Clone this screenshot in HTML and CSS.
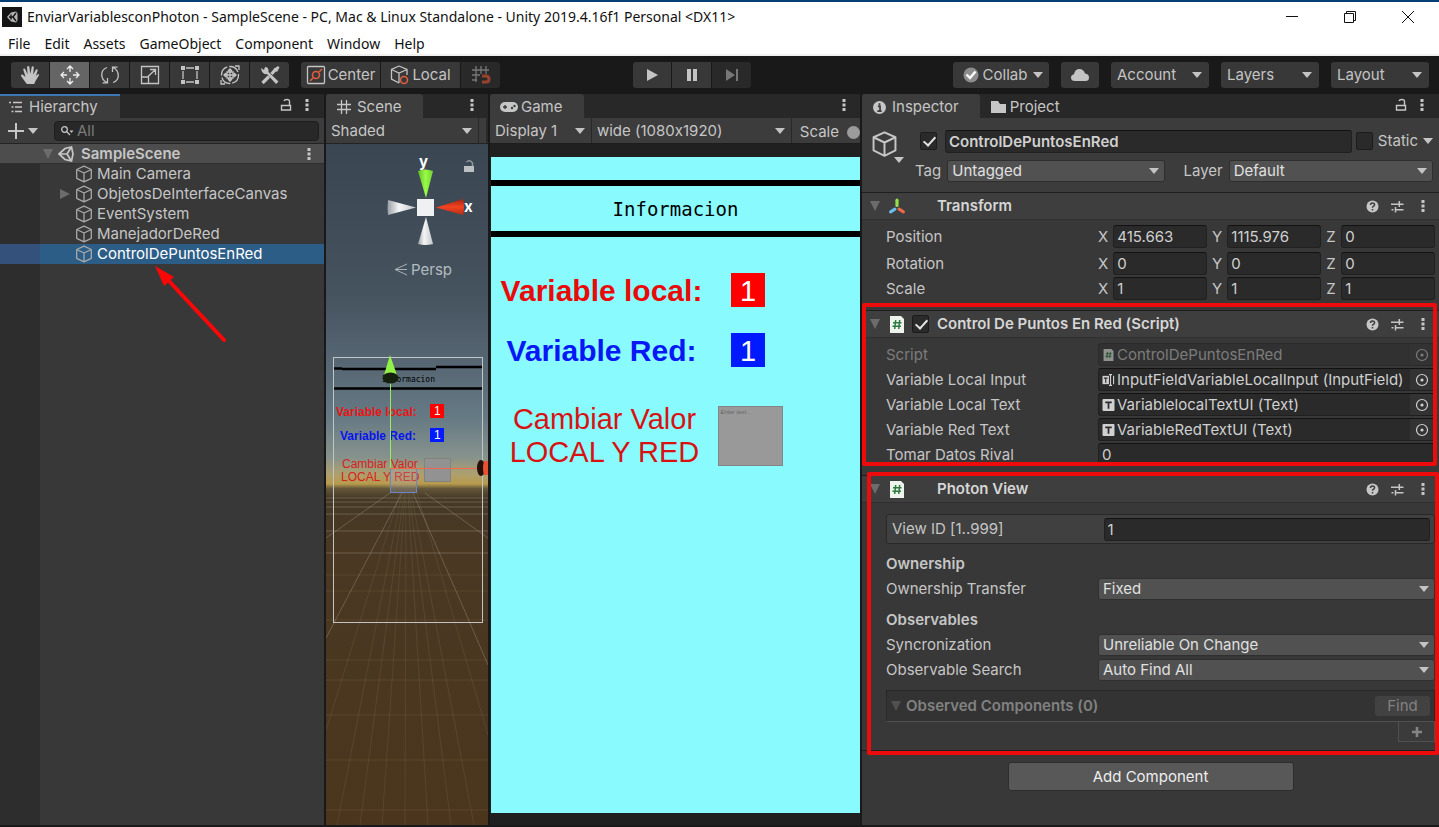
FILE: index.html
```html
<!DOCTYPE html>
<html lang="es">
<head>
<meta charset="utf-8">
<title>EnviarVariablesconPhoton - Unity</title>
<meta name="viewport" content="width=device-width, initial-scale=1">
<link rel="stylesheet" href="styles.css">
</head>
<body>
<svg class="defs" aria-hidden="true">
  <symbol id="kebab" viewBox="0 0 4 14"><path d="M.5 1h3v3h-3zM.5 5.500h3v3h-3zM.5 10h3v3h-3z"/></symbol>
  <symbol id="lock" viewBox="0 0 12 14"><path d="M1.500 7.500h9v4.500h-9zM9.500 7V3.500Q9.500 1.500 7 1.500Q4.500 1.500 4 3" fill="none" stroke="currentColor" stroke-width="1.400"/></symbol>
  <symbol id="caret" viewBox="0 0 10 6"><path d="M0 0h10L5 6z"/></symbol>
  <symbol id="cube" viewBox="0 0 18 18"><path d="M9 1.200L16.300 4.500V13.300L9 16.900L1.700 13.300V4.500zM1.700 4.500L9 8L16.300 4.500M9 8V16.900" fill="none" stroke="currentColor" stroke-width="1.300" stroke-linejoin="round"/></symbol>
  <symbol id="help" viewBox="0 0 13 13"><circle cx="6.500" cy="6.500" r="6"/><path d="M4.500 5Q4.500 3 6.500 3Q8.600 3 8.600 4.800Q8.600 5.800 7.300 6.400Q6.500 6.900 6.500 7.800M6.500 9v1.600" fill="none" stroke="#3c3c3c" stroke-width="1.500"/></symbol>
  <symbol id="presets" viewBox="0 0 13 13"><path d="M0 4.300h8M8.300 1v6M8.300 4.300h4.200M.5 9.800h2M4.500 9.800h8M4.500 7v5.500" fill="none" stroke="currentColor" stroke-width="1.500"/></symbol>
  <symbol id="script" viewBox="0 0 14 17"><path d="M0 0h11l3 3v14H0z" fill="#eef3ee"/><path d="M5.700 4L4.700 13M9.700 4L8.700 13M3 6.700h8.500M2.500 10.300H11" stroke="#2c7a3f" stroke-width="1.500" fill="none"/></symbol>
  <symbol id="textobj" viewBox="0 0 11 11"><rect width="11" height="11" rx="1"/><path d="M2.500 3.200h6M5.500 3v6" stroke="#2b2b2b" stroke-width="1.600" fill="none"/></symbol>
  <symbol id="inputobj" viewBox="0 0 13 13"><path d="M0 2h7v9H0z"/><path d="M1.500 4.500h4M3.500 4.500v5" stroke="#2b2b2b" stroke-width="1.200"/><path d="M7 .7h1.700M10.300.7H8.700v11.600M7 12.300h3.300M12 2v9" fill="none" stroke="currentColor" stroke-width="1.200"/></symbol>
  <symbol id="target" viewBox="0 0 14 14"><circle cx="7" cy="7" r="5.500" fill="none" stroke="currentColor" stroke-width="1.200"/><circle cx="7" cy="7" r="1.600"/></symbol>
</svg>

<header class="window-head">
  <div class="titlebar">
    <svg class="app-icon" viewBox="0 0 20 20"><rect width="20" height="20" fill="#151515"/><path d="M5 10l4-4.500 5-1 1.500 2v7l-1.500 2-5-1z" fill="#b4b4b4"/><path d="M7 10h4l3-4M11 10l3 4M9 7.500v5" stroke="#151515" stroke-width="1.400" fill="none"/></svg>
    <h1>EnviarVariablesconPhoton - SampleScene - PC, Mac &amp; Linux Standalone - Unity 2019.4.16f1 Personal &lt;DX11&gt;</h1>
    <div class="window-buttons">
      <button aria-label="Minimize"><svg viewBox="0 0 12 12"><path d="M0 5.500h12"/></svg></button>
      <button aria-label="Restore"><svg viewBox="0 0 12 12"><path d="M.5 2.500h9v9h-9zM2.500 2.500v-2h9v9h-2"/></svg></button>
      <button aria-label="Close"><svg viewBox="0 0 12 12"><path d="M0 0l12 12M12 0L0 12"/></svg></button>
    </div>
  </div>
  <nav class="menubar">
    <button>File</button><button>Edit</button><button>Assets</button><button>GameObject</button><button>Component</button><button>Window</button><button>Help</button>
  </nav>
</header>

<div class="toolbar">
  <div class="tools">
    <button class="tool" aria-label="Hand"><svg viewBox="0 0 20 20"><path d="M6 18L1 11Q.8 9.300 2.400 9.600L5.600 12L3.200 4.400Q3.600 2.800 5 3.800L7.600 9.500L7 1.800Q8.200.2 9.300 1.600L10.300 9L11.800 1.600Q13 .6 13.800 2L13.300 9.500L16 4.500Q17.600 3.800 17.700 5.400L15.700 11.500Q16.500 9.500 18.500 9Q19.600 9.400 18.900 10.500L15.500 16L14.200 19H7z"/></svg></button>
    <button class="tool active" aria-label="Move"><svg viewBox="0 0 20 20"><path d="M10 7V2M10 13v5M7 10H2M13 10h5M7 4l3-3 3 3M7 16l3 3 3-3M4 7l-3 3 3 3M16 7l3 3-3 3" class="line"/></svg></button>
    <button class="tool" aria-label="Rotate"><svg viewBox="0 0 20 20"><path d="M7 17.500C0 14 0 5 7 2.500M2.500 17.800h5V13M13 2.500C20 6 20 15 13 17.500M17.500 2.200h-5V7" class="line"/></svg></button>
    <button class="tool" aria-label="Scale"><svg viewBox="0 0 20 20"><path d="M1.500 1.500h17v17h-17zM1.500 12h7v6.500M8 11.500L15 5M10 4.500h5.500V10" class="line"/></svg></button>
    <button class="tool" aria-label="Rect"><svg viewBox="0 0 20 20"><path d="M3 6v8M17 6v8M6 3h8M6 17h8" class="line"/><path d="M1 1h4v4H1zM15 1h4v4h-4zM1 15h4v4H1zM15 15h4v4h-4z"/></svg></button>
    <button class="tool" aria-label="Transform"><svg viewBox="0 0 20 20"><circle cx="10" cy="10" r="8.500" class="line" stroke-dasharray="11 2"/><path d="M10 4v12M4 10h12M8 6l2-2 2 2M8 14l2 2 2-2M6 8l-2 2 2 2M14 8l2 2-2 2M7 7h6v6H7zM15 1h4v4M1 15v4h4" class="line"/></svg></button>
    <button class="tool" aria-label="Custom tools"><svg viewBox="0 0 20 20"><path d="M2.500 18L9 11.500M11.500 9L16 4" stroke="currentColor" stroke-width="3.200"/><path d="M1 3l3 2 1-3Q9 2 8.500 7L18.500 16.500l-2.500 2.500L7 9Q2 10 1 3zM13.500 4l4.500-3 1.500 1.500L17 7z"/></svg></button>
  </div>
  <div class="tools pivot">
    <button class="tool wide"><svg viewBox="0 0 20 20"><rect x="1.500" y="1.500" width="17" height="17" rx="1" class="line"/><path d="M4 16l3-3M13 7l3-3" class="line red"/><circle cx="10" cy="10" r="3.500" class="line red"/></svg>Center</button>
    <button class="tool wide"><svg viewBox="0 0 20 20"><path d="M9 1L17 4.500V10M9 1L1.500 4.500V14L9 18M1.500 4.500L9 8L17 4.500M9 8v10" class="line"/><circle cx="14" cy="15" r="3.500" class="line red"/></svg>Local</button>
    <button class="tool disabled" aria-label="Grid snapping" disabled><svg viewBox="0 0 20 20"><path d="M5 1v16M10 1v8M15 1v8M1 5h17M1 10h8M1 15h5" class="line"/><path d="M11 11h4q3 0 3 3t-3 3h-4" class="line snap"/></svg></button>
  </div>
  <div class="tools play">
    <button class="tool" aria-label="Play"><svg viewBox="0 0 20 20"><path d="M5 4l11 6-11 6z"/></svg></button>
    <button class="tool" aria-label="Pause"><svg viewBox="0 0 20 20"><path d="M5 4h4v12H5zM11 4h4v12h-4z"/></svg></button>
    <button class="tool disabled" aria-label="Step" disabled><svg viewBox="0 0 20 20"><path d="M4 4l9 6-9 6zM14 4h2v12h-2z"/></svg></button>
  </div>
  <div class="menus">
    <button class="menu collab"><svg class="ic16" viewBox="0 0 16 16"><circle cx="8" cy="8" r="7.500" fill="#8c8c8c"/><path d="M3.500 7.500L7 11L12.500 4.500" stroke="#fff" stroke-width="2.400" fill="none"/></svg><span>Collab</span><svg class="caret"><use href="#caret"/></svg></button>
    <button class="menu cloud" aria-label="Services"><svg viewBox="0 0 18 14"><path d="M4 13Q0 13 0 9.500Q0 7 3 6.300Q4 1 8.500 1Q12.500 1 14 5.500Q18 6 18 9.500Q18 13 14.500 13z"/></svg></button>
    <button class="menu">Account<svg class="caret"><use href="#caret"/></svg></button>
    <button class="menu">Layers<svg class="caret"><use href="#caret"/></svg></button>
    <button class="menu">Layout<svg class="caret"><use href="#caret"/></svg></button>
  </div>
</div>

<main class="panels">
  <section class="panel hierarchy">
    <div class="tabs">
      <button class="tab current focused"><svg class="ic14" viewBox="0 0 14 14"><path d="M0 2.500h2M4 2.500h9M2.500 7h2M6 7h7M2.500 11.500h2M6 11.500h7" class="line"/></svg>Hierarchy</button>
      <div class="tab-actions"><button aria-label="Lock"><svg class="lock"><use href="#lock"/></svg></button><button aria-label="Options"><svg class="kebab"><use href="#kebab"/></svg></button></div>
    </div>
    <div class="strip search-strip">
      <button class="add" aria-label="Create"><svg class="ic16" viewBox="0 0 16 16"><path d="M8 0v16M0 8h16" stroke="currentColor" stroke-width="2"/></svg><svg class="caret"><use href="#caret"/></svg></button>
      <label class="search"><svg viewBox="0 0 14 12"><circle cx="3.500" cy="4.500" r="2.800" class="line"/><path d="M5.500 6.500L9 10" class="line"/><path d="M8.500 5.500h4L10.500 8z"/></svg><input type="text" placeholder="All" aria-label="Search hierarchy"></label>
    </div>
    <div class="tree">
      <div class="row scene-row"><svg class="fold" viewBox="0 0 10 10"><path d="M0 0h10L5 10z"/></svg><svg class="ic16" viewBox="0 0 16 16"><path d="M1 8L7 2.500l6.500-1.500L15 8L13.500 15L7 13.500zM1 8h8M9 8L13 1.500M9 8l4 6.500" fill="none" stroke="currentColor" stroke-width="1.700"/></svg><strong>SampleScene</strong><button aria-label="Scene options"><svg class="kebab"><use href="#kebab"/></svg></button></div>
      <div class="row"><span class="foldspace"></span><svg class="cube"><use href="#cube"/></svg>Main Camera</div>
      <div class="row"><svg class="fold right" viewBox="0 0 10 10"><path d="M0 0v10l10-5z"/></svg><svg class="cube"><use href="#cube"/></svg>ObjetosDeInterfaceCanvas</div>
      <div class="row"><span class="foldspace"></span><svg class="cube"><use href="#cube"/></svg>EventSystem</div>
      <div class="row"><span class="foldspace"></span><svg class="cube"><use href="#cube"/></svg>ManejadorDeRed</div>
      <div class="row selected"><span class="foldspace"></span><svg class="cube"><use href="#cube"/></svg>ControlDePuntosEnRed</div>
      <svg class="pointer" viewBox="0 0 74 78"><path d="M72 75L16 15" stroke="#fb0707" stroke-width="4" stroke-linecap="round"/><path d="M3 1L22 12L12 21z" fill="#fb0707"/></svg>
    </div>
  </section>

  <section class="panel scene">
    <div class="tabs">
      <button class="tab current"><svg class="ic14" viewBox="0 0 14 14"><path d="M4.500 0v14M9.500 0v14M0 4.500h14M0 9.500h14" class="line"/></svg>Scene</button>
      <div class="tab-actions"><button aria-label="Options"><svg class="kebab"><use href="#kebab"/></svg></button></div>
    </div>
    <div class="strip"><label class="flat shade"><select aria-label="Draw mode"><option>Shaded</option></select></label><span class="rule"></span></div>
    <svg class="scene-view" viewBox="326 144 162 681" preserveAspectRatio="xMidYMin slice">
      <defs>
        <linearGradient id="sky" gradientUnits="userSpaceOnUse" x1="0" y1="144" x2="0" y2="825"><stop offset="0" stop-color="#3a4652"/><stop offset=".22" stop-color="#45535f"/><stop offset=".32" stop-color="#566672"/><stop offset=".4" stop-color="#657984"/><stop offset=".46" stop-color="#86928c"/><stop offset=".485" stop-color="#aea06e"/><stop offset=".499" stop-color="#b89b4c"/><stop offset=".506" stop-color="#63563a"/><stop offset=".52" stop-color="#453926"/><stop offset=".6" stop-color="#4a3823"/><stop offset="1" stop-color="#4b361d"/></linearGradient>
        <linearGradient id="white-cone"><stop offset="0" stop-color="#999ea3"/><stop offset=".4" stop-color="#f5f5f5"/><stop offset="1" stop-color="#c4c7ca"/></linearGradient>
        <linearGradient id="green-cone"><stop offset="0" stop-color="#65bd25"/><stop offset=".5" stop-color="#98fb47"/><stop offset="1" stop-color="#75d22e"/></linearGradient>
        <linearGradient id="red-cone" x1="0" y1="0" x2="0" y2="1"><stop offset="0" stop-color="#a52411"/><stop offset=".5" stop-color="#f34421"/><stop offset="1" stop-color="#b82a12"/></linearGradient>
      </defs>
      <rect x="-1000" y="144" width="3000" height="900" fill="url(#sky)"/>
      <path d="M326 498h162M326 502h162M326 507h162M326 514h162M326 531h162M326 553h162M402 493L346 600L326 638M413 493L460 600L488 665M425 493L488 538M390 493L326 538" stroke="#a39b88" stroke-opacity=".4" fill="none"/>
      <path d="M404 493L360 825M405 493L382 825M406 493L405 825M408 493L428 825M409 493L451 825M411 493L474 825M402 493L337 825M400 493L326 730M417 493L488 735M326 591h162M326 620h162M326 660h162M326 680h162M326 715h162M326 760h162M326 810h162M326 575h162" stroke="#9d8a62" stroke-opacity=".18" fill="none"/>
      <rect x="333.500" y="357.500" width="149" height="265" fill="none" stroke="#c1c5c6"/>
      <path d="M334 368.500h8M342 369h94M436 367h46M334 388.500h148" stroke="#000" stroke-width="2.400"/>
      <text x="382" y="382" class="mini-mono">Informacion</text>
      <g class="mini"><text x="336" y="416" fill="#e91515" font-weight="700">Variable local:</text><text x="340" y="440" fill="#0714ee" font-weight="700">Variable Red:</text><text x="342" y="468" fill="#d42222">Cambiar Valor</text><text x="341" y="481" fill="#d42222">LOCAL Y RED</text></g>
      <path d="M430 404h14v14h-14z" fill="#f00"/><path d="M430 428h14v14h-14z" fill="#001aff"/>
      <g class="mini" fill="#fff"><text x="434" y="415">1</text><text x="434" y="439">1</text></g>
      <rect x="424.500" y="458.500" width="26" height="23" fill="#929292" stroke="#7f8381"/>
      <rect x="390.500" y="468.500" width="26" height="24" fill="#a6a4bb" fill-opacity=".25" stroke="#6a86c8"/>
      <path d="M390.500 377v91" stroke="#95ee56"/><path d="M390 468.500h91" stroke="#ef684c"/>
      <path d="M390 355L384 375h13z" fill="#92f247"/><ellipse cx="390.500" cy="378" rx="8" ry="5.500" fill="#16210f"/>
      <ellipse cx="481" cy="468" rx="4" ry="8" fill="#25100c"/><path d="M484 461h4v14h-4q-2-7 0-14" fill="#e85132"/>
      <path d="M418 171q7-3 15 0l-7 27z" fill="url(#green-cone)"/>
      <path d="M388 200q-1 8 0 15l28-7.500z" fill="url(#white-cone)"/>
      <path d="M463 199q2 8 0 16l-27-7.500z" fill="url(#red-cone)"/>
      <path d="M418 244q7 2 15 0l-7-27z" fill="url(#white-cone)"/>
      <path d="M417 199h17v17h-17z" fill="#eef0f2"/>
      <g class="axis"><text x="419" y="167">y</text><text x="464" y="212">x</text></g>
      <path d="M407 264l-12 5.500L407 275M395 269.500h12" fill="none" stroke="#a8b0b5"/>
      <text x="411" y="275" class="persp">Persp</text>
      <path d="M464 166h10v6h-10z" fill="#bcc0c3"/><path d="M472.500 166v-3q-3-4-6-1" fill="none" stroke="#8e979d" stroke-width="1.500"/>
    </svg>
  </section>

  <section class="panel game">
    <div class="tabs">
      <button class="tab current"><svg class="pad" viewBox="0 0 18 11"><rect width="18" height="10" rx="5"/><path d="M3 5h4M5 3v4" stroke="#3c3c3c" stroke-width="1.400"/><circle cx="12" cy="6" r="1.200" fill="#3c3c3c"/><circle cx="14.500" cy="4" r="1.200" fill="#3c3c3c"/></svg>Game</button>
      <div class="tab-actions"><button aria-label="Options"><svg class="kebab"><use href="#kebab"/></svg></button></div>
    </div>
    <div class="strip"><label class="flat display"><select aria-label="Display"><option>Display 1</option></select></label><label class="flat aspect"><select aria-label="Aspect ratio"><option>wide (1080x1920)</option></select></label><span class="scale">Scale<i></i></span></div>
    <div class="stage">
      <div class="screen">
        <h2>Informacion</h2>
        <div class="values">
          <strong class="local">Variable local:</strong><span class="num red-num">1</span>
          <strong class="net">Variable Red:</strong><span class="num blue-num">1</span>
          <label for="value" class="change">Cambiar Valor<br>LOCAL Y RED</label><textarea id="value" placeholder="Enter text..."></textarea>
        </div>
      </div>
    </div>
  </section>

  <section class="panel inspector">
    <div class="tabs">
      <button class="tab current"><svg class="ic12" viewBox="0 0 12 12"><circle cx="6" cy="6" r="6"/><path d="M6 2v2M4.500 5h2v4M4 9.300h4" stroke="#3c3c3c" stroke-width="1.600" fill="none"/></svg>Inspector</button>
      <button class="tab"><svg class="folder" viewBox="0 0 15 12"><path d="M0 0h7l2 3h6v9H0z"/></svg>Project</button>
      <div class="tab-actions"><button aria-label="Lock"><svg class="lock"><use href="#lock"/></svg></button><button aria-label="Options"><svg class="kebab"><use href="#kebab"/></svg></button></div>
    </div>
    <div class="object-head">
      <button class="object-icon" aria-label="Object icon"><svg class="bigcube"><use href="#cube"/></svg><svg class="caret"><use href="#caret"/></svg></button>
      <div class="object-fields">
        <div class="object-line"><input type="checkbox" checked aria-label="Active"><input class="field name" type="text" value="ControlDePuntosEnRed" aria-label="Name"><input type="checkbox" id="static"><label for="static">Static</label><svg class="caret"><use href="#caret"/></svg></div>
        <div class="object-line second"><label for="tag" class="tag">Tag</label><span class="drop tag-drop"><select id="tag"><option>Untagged</option></select></span><label for="layer" class="layer">Layer</label><span class="drop layer-drop"><select id="layer"><option>Default</option></select></span></div>
      </div>
    </div>

    <section class="component">
      <div class="comp-head"><svg class="fold" viewBox="0 0 10 10"><path d="M0 0h10L5 10z"/></svg><svg class="comp-icon" viewBox="0 0 16 16"><path d="M8 2v5" stroke="#95df4a" stroke-width="3" stroke-linecap="round"/><path d="M6 10.500l-4 2.500" stroke="#69bbec" stroke-width="3" stroke-linecap="round"/><path d="M10 10.500l4 2.500" stroke="#e9694b" stroke-width="3" stroke-linecap="round"/></svg><span class="toggle"></span><h3>Transform</h3><div class="head-actions"><button aria-label="Help"><svg><use href="#help"/></svg></button><button aria-label="Presets"><svg><use href="#presets"/></svg></button><button aria-label="Options"><svg class="kebab"><use href="#kebab"/></svg></button></div></div>
      <div class="comp-body transform">
        <div class="prop first"><span>Position</span><div class="vec"><label for="px">X</label><input id="px" class="field" value="415.663"><label for="py">Y</label><input id="py" class="field" value="1115.976"><label for="pz">Z</label><input id="pz" class="field" value="0"></div></div>
        <div class="prop"><span>Rotation</span><div class="vec"><label for="rx">X</label><input id="rx" class="field" value="0"><label for="ry">Y</label><input id="ry" class="field" value="0"><label for="rz">Z</label><input id="rz" class="field" value="0"></div></div>
        <div class="prop"><span>Scale</span><div class="vec"><label for="sx">X</label><input id="sx" class="field" value="1"><label for="sy">Y</label><input id="sy" class="field" value="1"><label for="sz">Z</label><input id="sz" class="field" value="1"></div></div>
      </div>
    </section>

    <section class="component marked marked-script">
      <div class="comp-head"><svg class="fold" viewBox="0 0 10 10"><path d="M0 0h10L5 10z"/></svg><svg class="comp-icon"><use href="#script"/></svg><span class="toggle"><input type="checkbox" checked aria-label="Enabled"></span><h3>Control De Puntos En Red (Script)</h3><div class="head-actions"><button aria-label="Help"><svg><use href="#help"/></svg></button><button aria-label="Presets"><svg><use href="#presets"/></svg></button><button aria-label="Options"><svg class="kebab"><use href="#kebab"/></svg></button></div></div>
      <div class="comp-body script-body">
        <div class="prop dim"><span>Script</span><div class="field object"><svg><use href="#script"/></svg><span>ControlDePuntosEnRed</span><button aria-label="Pick script" disabled><svg><use href="#target"/></svg></button></div></div>
        <div class="prop"><span>Variable Local Input</span><div class="field object"><svg><use href="#inputobj"/></svg><span>InputFieldVariableLocalInput (InputField)</span><button aria-label="Pick input"><svg><use href="#target"/></svg></button></div></div>
        <div class="prop"><span>Variable Local Text</span><div class="field object"><svg><use href="#textobj"/></svg><span>VariablelocalTextUI (Text)</span><button aria-label="Pick local text"><svg><use href="#target"/></svg></button></div></div>
        <div class="prop"><span>Variable Red Text</span><div class="field object"><svg><use href="#textobj"/></svg><span>VariableRedTextUI (Text)</span><button aria-label="Pick network text"><svg><use href="#target"/></svg></button></div></div>
        <div class="prop"><label for="rival">Tomar Datos Rival</label><input id="rival" class="field" value="0"></div>
      </div>
    </section>

    <section class="component marked marked-photon">
      <div class="comp-head"><svg class="fold" viewBox="0 0 10 10"><path d="M0 0h10L5 10z"/></svg><svg class="comp-icon"><use href="#script"/></svg><span class="toggle"></span><h3>Photon View</h3><div class="head-actions"><button aria-label="Help"><svg><use href="#help"/></svg></button><button aria-label="Presets"><svg><use href="#presets"/></svg></button><button aria-label="Options"><svg class="kebab"><use href="#kebab"/></svg></button></div></div>
      <div class="comp-body photon-body">
        <div class="view-id"><label for="viewid">View ID [1..999]</label><input id="viewid" class="field" value="1"></div>
        <h4>Ownership</h4>
        <div class="prop"><label for="transfer">Ownership Transfer</label><span class="drop"><select id="transfer"><option>Fixed</option></select></span></div>
        <h4>Observables</h4>
        <div class="prop"><label for="sync">Syncronization</label><span class="drop"><select id="sync"><option>Unreliable On Change</option></select></span></div>
        <div class="prop"><label for="searchmode">Observable Search</label><span class="drop"><select id="searchmode"><option>Auto Find All</option></select></span></div>
        <div class="observed"><svg class="fold" viewBox="0 0 10 10"><path d="M0 0h10L5 10z"/></svg><strong>Observed Components (0)</strong><button disabled>Find</button></div>
        <button class="plus" aria-label="Add observed" disabled><svg viewBox="0 0 10 10"><path d="M5 0v10M0 5h10" stroke="currentColor" stroke-width="2.600"/></svg></button>
      </div>
    </section>
    <div class="add-wrap"><button class="add-component">Add Component</button></div>
  </section>
</main>
</body>
</html>
```
FILE: styles.css
```css
* { box-sizing: border-box; }

body {
  margin: 0;
  min-height: 100vh;
  display: flex;
  flex-direction: column;
  background: #191919;
  color: #c6c6c6;
  font: 15px/20px Inter, "Liberation Sans", sans-serif;
  font-feature-settings: "calt" 0;
}

button, input, select, textarea {
  margin: 0;
  padding: 0;
  border: 0;
  background: none;
  color: inherit;
  font: inherit;
  font-feature-settings: inherit;
  appearance: none;
}

button { display: flex; align-items: center; justify-content: center; }
h1, h2, h3, h4 { margin: 0; font: inherit; }
svg { display: block; flex: none; fill: currentColor; }
.defs { position: absolute; width: 0; height: 0; }
.line { fill: none; stroke: currentColor; stroke-width: 1.3; }
.line.red { stroke: #e05d42; stroke-width: 1.6; }
.line.snap { stroke: #97442f; stroke-width: 3; }
.ic12 { width: 13px; height: 13px; }
.ic14 { width: 14px; height: 14px; }
.ic16 { width: 16px; height: 16px; }
.caret { width: 10px; height: 6px; }
.kebab { width: 4px; height: 14px; }
.lock { width: 12px; height: 14px; }

/* Window frame */
.window-head {
  background: #fff;
  color: #111;
  border-top: 2px solid #063f73;
  border-bottom: 2px solid #f0f0f0;
  font-family: "Noto Sans", "Open Sans", sans-serif;
  font-size: 14px;
}
.titlebar { display: flex; align-items: center; height: 30px; padding-left: 2px; }
.app-icon { width: 20px; height: 20px; margin-right: 5px; }
.window-buttons { display: flex; margin-left: auto; padding-right: 2px; align-self: stretch; }
.window-buttons button { width: 58px; }
.window-buttons svg { width: 12px; height: 12px; fill: none; stroke: #111; }
.menubar { display: flex; gap: 14px; height: 22px; padding: 1px 0 0 8px; }

/* Main toolbar */
.toolbar { display: flex; height: 38px; padding: 6px 10px 6px 11px; color: #c4c4c4; }
.tools { display: flex; gap: 1px; margin-right: 12px; }
.tool { width: 39px; background: #383838; }
.tool:first-child { width: 38px; border-radius: 3px 0 0 3px; }
.tool:last-child { border-radius: 0 3px 3px 0; }
.tool svg { width: 20px; height: 20px; }
.pivot .tool.wide { width: 79px; gap: 2px; }
.tool.active { background: #656565; color: #eee; }
.tool.disabled { background: #292929; color: #777; }
.tools + .tools { margin-right: 0; }
.play { margin-left: 133px; }
.menus { display: flex; gap: 12px; margin-left: auto; }
.menu { justify-content: space-between; width: 98px; padding: 0 7px 0 6px; border-radius: 3px; background: #383838; }
.menu.collab { width: 96px; padding: 0 6px 0 10px; }
.collab span { margin-left: -2px; }
.menu.cloud { width: 38px; padding: 0 10px; }
.cloud svg { width: 18px; height: 14px; }

/* Panels */
.panels {
  flex: 1;
  display: grid;
  grid-template-columns: 324fr 162fr 370fr 577fr;
  gap: 2px;
  padding-bottom: 2px;
}
.panel { min-width: 0; display: flex; flex-direction: column; background: #383838; }
.tabs { display: flex; height: 24px; background: #282828; }
.tab { gap: 6px; padding: 2px 21px 0 10px; }
.scene .tab { padding-left: 11px; }
.inspector .tab { padding-left: 11px; }
.tab.current { background: #3c3c3c; border-radius: 3px 3px 0 0; }
.tab.focused { padding: 0 22px 0 9px; border-top: 2px solid #3d78b5; border-radius: 0; }
.tab .pad { width: 18px; height: 11px; margin-right: -3px; }
.folder { width: 15px; height: 12px; margin-right: -2px; }
.tab-actions { display: flex; gap: 13px; margin-left: auto; padding: 0 15px 2px 0; }
.scene .tab-actions, .game .tab-actions { padding-right: 14px; }
.strip {
  display: flex;
  height: 26px;
  background: #3c3c3c;
  border-bottom: 1px solid #232323;
  overflow: hidden;
}
.flat { position: relative; display: flex; align-items: center; }
.flat::after, .drop::after {
  content: "";
  position: absolute;
  right: 6px;
  top: 8px;
  border: 5px solid transparent;
  border-top: 6px solid #c4c4c4;
  border-bottom: 0;
  pointer-events: none;
}
.flat::after { top: 10px; }
.flat select { width: 100%; height: 24px; padding-left: 5px; }

/* Hierarchy */
.search-strip { align-items: center; padding: 0 5px 0 8px; }
.add { gap: 4px; margin-right: 16px; }
.search {
  flex: 1;
  display: flex;
  align-items: center;
  height: 20px;
  padding-left: 6px;
  gap: 2px;
  background: #282828;
  border: 1px solid #1d1d1d;
  border-radius: 4px;
}
.search svg { width: 14px; height: 12px; }
.search input { flex: 1; min-width: 0; height: 18px; }
.search input::placeholder { color: #7b7b7b; opacity: 1; }
.tree { position: relative; flex: 1; background: linear-gradient(90deg, #2d2d2d 40px, transparent 40px); }
.row { display: flex; align-items: center; height: 20px; padding-left: 60px; }
.cube { width: 18px; height: 18px; margin-right: 4px; color: #a9a9a9; }
.foldspace { width: 15px; }
.fold { width: 10px; height: 10px; color: #6c6c6c; }
.fold.right { margin-right: 5px; }
.scene-row { padding: 0 13px 0 43px; background: #4d4d4d; border-bottom: 1px solid #303030; }
.scene-row .ic16 { margin: 0 7px 0 5px; }
.scene-row strong, .comp-head h3, .photon-body h4, .observed strong, .name { font-weight: 600; }
.scene-row button { margin-left: auto; }
.row.selected { color: #fff; background: linear-gradient(90deg, #34517b 40px, #2c5d87 40px); }
.pointer { position: absolute; left: 152px; top: 121px; width: 74px; height: 78px; }

/* Scene */
.shade { flex: 1; }
.rule { width: 10px; margin: 0; border-left: 1px solid #2a2a2a; border-right: 2px solid #2a2a2a; }
.scene-view { flex: 1; width: 100%; min-height: 0; height: 0; }
.mini { font: 12px "Liberation Sans", sans-serif; }
.mini [font-weight] { font-weight: 700; }
.mini-mono { font: 8px "DejaVu Sans Mono", monospace; fill: #000; }
.axis { font: 700 15px Inter, sans-serif; fill: #fff; }
.persp { font: 15px Inter, sans-serif; fill: #b4bbc0; }

/* Game */
.game .strip { border-bottom-color: #1d1d1d; }
.display { width: 102px; border-right: 1px solid #282828; }
.aspect { width: 200px; border-right: 1px solid #282828; }
.scale { display: flex; align-items: center; gap: 8px; padding: 3px 0 0 8px; }
.scale i { width: 13px; height: 13px; border-radius: 50%; background: #9c9c9c; flex: none; }
.stage { flex: 1; display: flex; padding: 13px 0 12px 1px; background: #202020; }
.screen { flex: 1; padding-top: 23px; background: #89fbff; }
.screen h2 {
  height: 57px;
  border: solid #000;
  border-width: 6px 0;
  color: #000;
  text-align: center;
  font: 19px/46px "DejaVu Sans Mono", monospace;
}
.values {
  display: grid;
  grid-template-columns: 221fr 72fr 76fr;
  align-items: center;
  justify-items: center;
  row-gap: 26px;
  padding-top: 36px;
  font: 30px/36px "Liberation Sans", sans-serif;
}
.values > :nth-child(odd) { grid-column: 1; white-space: nowrap; }
.values strong { height: 34px; }
.local { color: #ea0a0a; }
.net { color: #0818f5; }
.num { width: 34px; height: 34px; color: #fff; text-align: center; font-size: 29px; }
.red-num { background: #f00; }
.blue-num { background: #001aff; }
.values .change { margin-top: 10px; padding-left: 6px; color: #d81212; font-size: 29px; line-height: 33px; text-align: center; }
.values textarea {
  width: 65px;
  height: 60px;
  margin: 10px 0 0 4px;
  padding: 2px;
  resize: none;
  overflow: hidden;
  background: #999;
  border: 1px solid #858585;
  font: italic 6px/7px "Liberation Sans", sans-serif;
}
.values textarea::placeholder { color: #666; opacity: 1; }

/* Inspector */
.field {
  min-width: 0;
  width: 100%;
  height: 23px;
  padding: 0 3px;
  background: #2a2a2a;
  border: 1px solid #202020;
  border-top-color: #121212;
  border-radius: 3px;
  color: #d0d0d0;
}
input[type="checkbox"] {
  position: relative;
  flex: none;
  width: 17px;
  height: 18px;
  background: #2a2a2a;
  border: 1px solid #1c1c1c;
  border-radius: 2px;
}
input[type="checkbox"]:checked::after {
  content: "";
  position: absolute;
  left: 5px;
  top: 1px;
  width: 5px;
  height: 10px;
  border: solid #e4e4e4;
  border-width: 0 2px 2px 0;
  transform: rotate(42deg);
}
.drop { position: relative; display: flex; flex: 1; min-width: 0; }
.drop select {
  width: 100%;
  height: 22px;
  padding: 0 4px 1px;
  background: #515151;
  border: 1px solid #2f2f2f;
  border-radius: 3px;
  color: #e0e0e0;
}
.object-head { display: flex; height: 74px; padding: 11px 6px 0 9px; background: #3c3c3c; }
.object-icon { flex-direction: column; width: 49px; justify-content: flex-start; align-items: flex-start; padding-top: 1px; }
.bigcube { width: 27px; height: 28px; }
.object-icon .caret { margin: -1px 0 0 23px; }
.object-fields { flex: 1; min-width: 0; }
.object-line { display: flex; align-items: center; height: 24px; gap: 4px; }
.object-line .name { flex: 1; margin-left: 4px; }
.object-line label[for="static"] { margin: 0 1px; }
.object-line.second { height: 23px; margin-top: 6px; gap: 6px; }
.tag { margin-left: -5px; }
.tag-drop { flex: 217; }
.layer-drop { flex: 204; }
.layer { margin-left: 13px; }
.component { position: relative; border-top: 1px solid #1f1f1f; }
.comp-head {
  display: flex;
  align-items: center;
  height: 27px;
  padding: 0 14px 0 8px;
  background: #3e3e3e;
  border-bottom: 1px solid #303030;
}
.comp-icon { width: 18px; height: 17px; margin: 0 6px 0 8px; }
.toggle { width: 25px; display: flex; }
.comp-head h3 { color: #d6d6d6; }
.head-actions { display: flex; gap: 12px; margin-left: auto; }
.head-actions svg { width: 13px; height: 13px; }
.head-actions .kebab { width: 4px; height: 14px; margin-left: 5px; }
.prop { display: grid; grid-template-columns: 212fr 337fr; align-items: center; min-height: 23px; }
.comp-body { display: flex; flex-direction: column; gap: 2px; padding: 5px 4px 10px 24px; }
.transform .first { margin-bottom: 2px; }
.vec { display: grid; grid-template-columns: auto 1fr auto 1fr auto 1fr; column-gap: 5px; align-items: center; }
.vec label { min-width: 10px; }
.script-body { padding-bottom: 9px; }
.object { display: flex; align-items: center; padding-right: 0; }
.object > svg { width: 13px; height: 12px; margin-right: 2px; }
.object > span { flex: 1; white-space: nowrap; overflow: hidden; }
.object button { width: 24px; height: 21px; background: #333; }
.object button svg { width: 14px; height: 14px; }
.dim { color: #7c7c7c; }
.dim .field { background: #313131; border-color: #2a2a2a; color: #7c7c7c; }
.dim .object > svg { opacity: .5; }
.photon-body { padding: 11px 4px 8px 24px; }
.view-id {
  display: grid;
  grid-template-columns: 212fr 327fr;
  align-items: center;
  height: 30px;
  padding: 0 4px 0 5px;
  margin-bottom: 8px;
  border: 1px solid #282828;
  border-radius: 3px;
  background: #404040;
}
.photon-body h4 { height: 21px; }
.photon-body .prop + h4 { margin-top: 8px; }
.observed {
  display: flex;
  align-items: center;
  height: 32px;
  margin-top: 7px;
  padding: 0 4px;
  gap: 5px;
  color: #818181;
  background: #333;
  border: 1px solid #282828;
  border-bottom-color: #505050;
}
.observed .fold { color: #505050; }
.observed button { margin-left: auto; width: 55px; height: 20px; border-radius: 3px; background: #424242; }
.plus { align-self: flex-end; width: 37px; height: 20px; margin-top: -2px; background: #3b3b3b; border: 1px solid #505050; border-top: 0; color: #858585; }
.plus svg { width: 10px; height: 10px; }
.marked::after {
  content: "";
  position: absolute;
  z-index: 1;
  border: 4px solid #ee0b0b;
  border-radius: 2px;
  pointer-events: none;
}
.marked-script::after { inset: -8px 2px 9px 0; }
.marked-photon::after { inset: -4px 0 -5px 5px; }
.add-wrap { display: flex; justify-content: center; padding: 11px 0; border-top: 1px solid #1f1f1f; }
.add-component { width: 286px; height: 29px; border: 1px solid #2d2d2d; border-radius: 3px; background: #585858; color: #eee; }
```
